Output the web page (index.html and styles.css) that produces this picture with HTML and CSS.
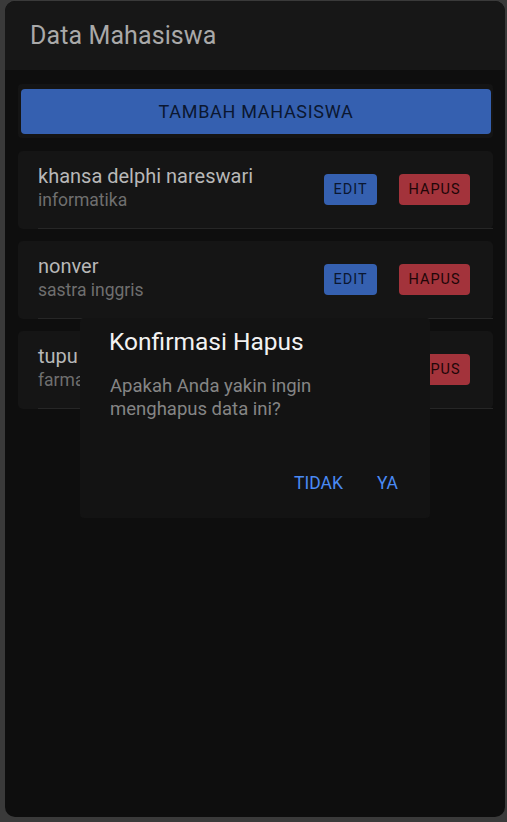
FILE: index.html
```html
<!DOCTYPE html>
<html lang="id">
<head>
<meta charset="utf-8">
<title>Data Mahasiswa</title>
<link rel="stylesheet" href="styles.css">
</head>
<body>
<div class="screen">
  <header class="appbar">
    <h1 class="appbar-title">Data Mahasiswa</h1>
  </header>
  <main class="content">
    <div class="add-wrap">
      <button class="btn-add">TAMBAH MAHASISWA</button>
    </div>
    <ul class="list">
      <li class="card">
        <div class="info">
          <div class="name">khansa delphi nareswari</div>
          <div class="major">informatika</div>
        </div>
        <div class="actions">
          <button class="btn btn-edit">EDIT</button>
          <button class="btn btn-del">HAPUS</button>
        </div>
      </li>
      <li class="card">
        <div class="info">
          <div class="name">nonver</div>
          <div class="major">sastra inggris</div>
        </div>
        <div class="actions">
          <button class="btn btn-edit">EDIT</button>
          <button class="btn btn-del">HAPUS</button>
        </div>
      </li>
      <li class="card">
        <div class="info">
          <div class="name">tupu</div>
          <div class="major">farmasi</div>
        </div>
        <div class="actions">
          <button class="btn btn-edit">EDIT</button>
          <button class="btn btn-del">HAPUS</button>
        </div>
      </li>
    </ul>
  </main>
  <div class="dialog">
    <h2 class="dialog-title">Konfirmasi Hapus</h2>
    <p class="dialog-text">Apakah Anda yakin ingin menghapus data ini?</p>
    <div class="dialog-actions">
      <button class="text-btn">TIDAK</button>
      <button class="text-btn">YA</button>
    </div>
  </div>
</div>
</body>
</html>
```

FILE: styles.css
```css
html, body {
  margin: 0;
  padding: 0;
}
body {
  background: #3a3a3a;
  font-family: Roboto, "Noto Sans", sans-serif;
  width: 507px;
  height: 822px;
  overflow: hidden;
}
.screen {
  position: relative;
  margin: 1px 2px 0 5px;
  height: 816px;
  background: #0e0e0e;
  border-radius: 10px;
  overflow: hidden;
  display: flex;
  flex-direction: column;
}
.appbar {
  height: 69px;
  background: #171717;
  display: flex;
  align-items: center;
  padding-left: 25px;
  flex-shrink: 0;
}
.appbar-title {
  margin: 0;
  font-size: 25px;
  font-weight: 400;
  color: #a9a9a9;
  letter-spacing: 0.1px;
}
.content {
  padding: 14px 12px 0 13px;
}
.add-wrap {
  background: #141414;
  border-radius: 4px;
  padding: 5px 2px 4px 3px;
}
.btn-add {
  display: block;
  width: 100%;
  height: 45px;
  border: 0;
  border-radius: 4px;
  background: #3560b0;
  color: #0b1730;
  font-family: inherit;
  font-size: 18px;
  letter-spacing: 0.7px;
}
.list {
  list-style: none;
  margin: 13px 0 0;
  padding: 0;
  display: flex;
  flex-direction: column;
  gap: 12px;
}
.card {
  position: relative;
  height: 78px;
  background: #151515;
  border-radius: 5px;
  display: flex;
  align-items: center;
  justify-content: space-between;
  padding: 0 23px 0 20px;
  box-sizing: border-box;
}
.card::after {
  content: "";
  position: absolute;
  left: 20px;
  right: 0;
  bottom: 0;
  height: 1px;
  background: #262626;
}
.info {
  margin-top: -4px;
}
.name {
  font-size: 20px;
  color: #b8b8b8;
  line-height: 24px;
}
.major {
  font-size: 17.5px;
  color: #6f6f6f;
  line-height: 24px;
}
.actions {
  display: flex;
  gap: 22px;
  margin-top: -2px;
}
.btn {
  height: 31px;
  border: 0;
  border-radius: 4px;
  font-family: inherit;
  font-size: 14.5px;
  letter-spacing: 1px;
  color: #0c0c0c;
  padding: 0;
}
.btn-edit {
  width: 53px;
  background: #3560b0;
  color: #0b1730;
}
.btn-del {
  width: 71px;
  background: #a3333b;
  color: #200608;
}
.dialog {
  position: absolute;
  left: 75px;
  top: 317px;
  width: 350px;
  height: 200px;
  box-sizing: border-box;
  background: #131313;
  border-radius: 4px;
  padding: 9px 29px 0 29px;
  display: flex;
  flex-direction: column;
}
.dialog-title {
  margin: 0;
  font-size: 24.5px;
  font-weight: 400;
  color: #f2f2f2;
  line-height: 30px;
}
.dialog-text {
  margin: 18px 0 0 1px;
  font-size: 18.5px;
  color: #858585;
  line-height: 23px;
}
.dialog-actions {
  margin-top: auto;
  margin-bottom: 25px;
  display: flex;
  justify-content: flex-end;
  gap: 34px;
  padding-right: 3px;
}
.text-btn {
  border: 0;
  background: none;
  padding: 0;
  font-family: inherit;
  font-size: 17.5px;
  line-height: 20px;
  color: #4a8af4;
}
```
